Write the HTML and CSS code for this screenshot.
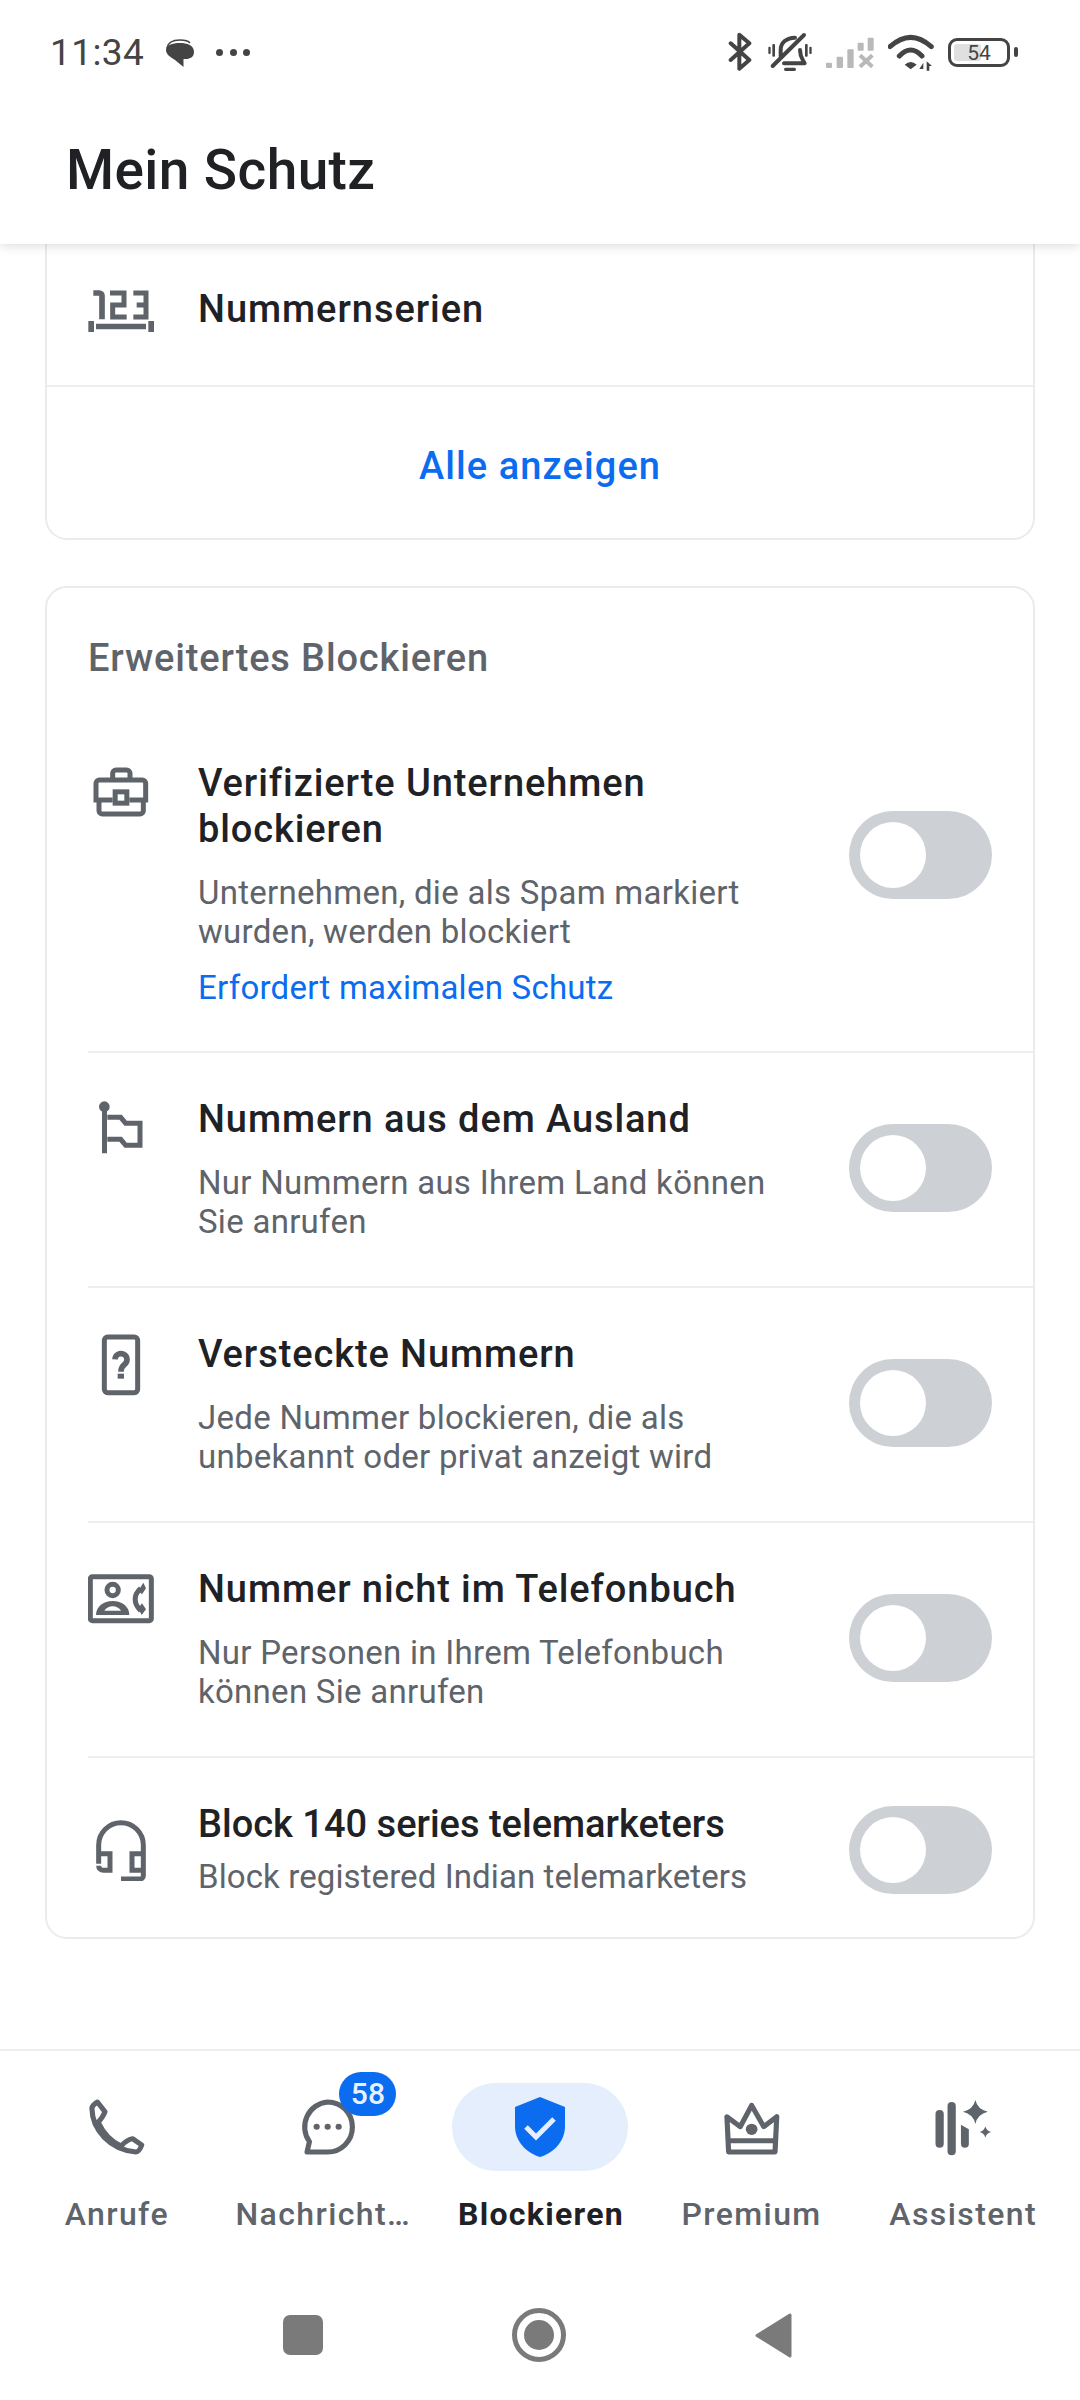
FILE: index.html
```html
<!DOCTYPE html>
<html lang="de">
<head>
<meta charset="utf-8">
<title>Mein Schutz</title>
<link rel="stylesheet" href="styles.css">
</head>
<body>
<div class="screen">
  <header class="top">
    <div class="status">
      <span class="time">11:34</span>
      <svg class="st-msg" viewBox="0 0 28 28"><path class="st-fill" d="M14 4C21 4 28 6 28 13C28 18 24 20 20 20H17.500V28L9 21C4 18 0 15 0 11C0 6 6 4 14 4Z"/><path class="st-line" d="M1 9C2 3 8 1 14 1C18 1 22 1.500 24 4"/></svg>
      <span class="st-dots"><i></i><i></i><i></i></span>
      <div class="st-right">
        <svg class="st-bt" viewBox="144 90 78 135"><path class="st-stroke" d="M152 130L208 180L178 206V104L208 130L152 180"/></svg>
        <svg class="st-bell" viewBox="264 90 132 135"><rect class="st-fill" x="265" y="140" width="7" height="22" rx="3"/><rect class="st-fill" x="277" y="132" width="8" height="38" rx="3"/><rect class="st-fill" x="375" y="132" width="8" height="38" rx="3"/><rect class="st-fill" x="388" y="140" width="7" height="22" rx="3"/><path class="st-stroke" d="M302 170V150C302 128 320 113 345 113M360 150C360 172 368 178 374 190H312M278 198L372 105"/><rect class="st-fill" x="312" y="203" width="36" height="10" rx="5"/></svg>
        <svg class="st-signal" viewBox="438 90 144 135"><g class="sig"><rect x="438" y="188" width="18" height="16" rx="3"/><rect x="470" y="170" width="19" height="34" rx="3"/><rect x="502" y="148" width="19" height="56" rx="3"/><rect x="533" y="128" width="18" height="24" rx="3"/><rect x="563" y="113" width="18" height="39" rx="3"/></g><path class="sig-x" d="M540 166L577 200M577 166L540 200"/></svg>
        <svg class="st-wifi" viewBox="622 90 138 135"><path class="st-stroke st-wide" d="M628 140Q690 84 752 140M656 168Q690 132 724 168"/><path class="st-fill" d="M672 194Q690 178 708 194L690 208Z"/><path class="st-fill" d="M716 207H728V188ZM738 184L754 198H746V212H738Z"/></svg>
        <div class="battery"><span class="bat-fill"></span><span class="bat-num">54</span><span class="bat-nub"></span></div>
      </div>
    </div>
    <h1 class="app-title">Mein Schutz</h1>
  </header>

  <main class="content">
    <section class="card card-open">
      <div class="series">
        <svg class="ic" viewBox="84 45 198 198"><path class="ic-l ic-17" d="M100 96H118A8 8 0 0 1 126 104V175"/><path class="ic-l" d="M150 96H192V132H158V168H200M220 96H258V168H220M230 132H258"/><path class="ic-f" d="M108 188H258V205H108ZM85 180H102V213H85ZM265 180H282V213H265Z"/></svg>
        <span class="series-label">Nummernserien</span>
      </div>
      <div class="show-all">Alle anzeigen</div>
    </section>

    <section class="card card-adv">
      <h2 class="card-title">Erweitertes Blockieren</h2>

      <div class="row row-first">
        <div class="row-main">
          <svg class="ic" viewBox="54 57 198 198"><path class="ic-l" d="M128 115V100A10 10 0 0 1 138 90H170A10 10 0 0 1 180 100V115M128 180H78V130A10 10 0 0 1 88 120H217A10 10 0 0 1 227 130V180H178M87 185V212A10 10 0 0 0 97 222H210A10 10 0 0 0 220 212V185"/><rect class="ic-l" x="135.500" y="155.500" width="35" height="34"/></svg>
          <div class="row-text">
            <div class="row-title">Verifizierte Unternehmen blockieren</div>
            <div class="row-sub">Unternehmen, die als Spam markiert wurden, werden blockiert</div>
          </div>
          <span class="toggle"><span class="thumb"></span></span>
        </div>
        <div class="row-link">Erfordert maximalen Schutz</div>
      </div>

      <div class="row">
        <div class="row-main">
          <svg class="ic" viewBox="54 45 198 198"><path class="ic-l" d="M103.500 75V220M112 112H152L167 130H210V196H167L152 178H112"/><circle class="ic-f" cx="103" cy="80" r="16"/></svg>
          <div class="row-text">
            <div class="row-title">Nummern aus dem Ausland</div>
            <div class="row-sub">Nur Nummern aus Ihrem Land können Sie anrufen</div>
          </div>
          <span class="toggle"><span class="thumb"></span></span>
        </div>
      </div>

      <div class="row">
        <div class="row-main">
          <svg class="ic" viewBox="54 747 198 198"><rect class="ic-l" x="103" y="768" width="100" height="167" rx="10"/><path class="ic-l ic-17" d="M135 835A18 18 0 1 1 164 850C156 856 153 860 153 872"/><rect class="ic-f" x="143" y="878" width="19" height="15"/></svg>
          <div class="row-text">
            <div class="row-title">Versteckte Nummern</div>
            <div class="row-sub">Jede Nummer blockieren, die als unbekannt oder privat anzeigt wird</div>
          </div>
          <span class="toggle"><span class="thumb"></span></span>
        </div>
      </div>

      <div class="row">
        <div class="row-main">
          <svg class="ic" viewBox="54 15 198 198"><rect class="ic-l" x="61" y="50" width="183" height="132" rx="6"/><circle class="ic-l" cx="128" cy="90" r="17"/><path class="ic-f" d="M78 165C78 140 100 123 128 123S178 140 178 165Z"/><path class="ic-cut" d="M103 152C108 144 118 139 128 139S148 144 153 152Z"/><path class="ic-l" d="M212 85C190 105 190 130 212 152"/><path class="ic-f" d="M205 92L220 68L228 85L216 103ZM205 145L216 130L228 148L215 165Z"/></svg>
          <div class="row-text">
            <div class="row-title">Nummer nicht im Telefonbuch</div>
            <div class="row-sub">Nur Personen in Ihrem Telefonbuch können Sie anrufen</div>
          </div>
          <span class="toggle"><span class="thumb"></span></span>
        </div>
      </div>

      <div class="row row-last">
        <div class="row-main">
          <svg class="ic ic-center" viewBox="54 759 198 198"><path class="ic-l" d="M86 905V849A67 67 0 0 1 220 849V941A10 10 0 0 1 210 951H153"/><path class="ic-l" d="M86 875H120V925H100A14 14 0 0 1 86 911M220 875H186V925H220"/></svg>
          <div class="row-text">
            <div class="row-title">Block 140 series telemarketers</div>
            <div class="row-sub">Block registered Indian telemarketers</div>
          </div>
          <span class="toggle"><span class="thumb"></span></span>
        </div>
      </div>
    </section>
  </main>

  <nav class="tabs">
    <div class="tab">
      <div class="tab-icon">
        <svg class="ic-nav" viewBox="244 162 192 198" preserveAspectRatio="none"><path class="ic-n" d="M283 186L305 215Q300 230 285 247Q310 300 352 318Q368 300 385 296L412 315Q405 335 395 336C320 330 268 270 267 205Q268 195 283 186Z"/></svg>
      </div>
      <span class="tab-label">Anrufe</span>
    </div>
    <div class="tab">
      <div class="tab-icon">
        <svg class="ic-nav" viewBox="860 162 192 198" preserveAspectRatio="none"><path class="ic-n" d="M955 186A72 75 0 0 1 955 336H895L902 305A72 75 0 0 1 955 186Z"/><circle class="ic-f" cx="923" cy="260" r="9"/><circle class="ic-f" cx="955" cy="260" r="9"/><circle class="ic-f" cx="987" cy="260" r="9"/></svg>
        <span class="badge">58</span>
      </div>
      <span class="tab-label">Nachrichten</span>
    </div>
    <div class="tab tab-active">
      <div class="tab-icon">
        <svg class="ic-nav" viewBox="0 0 66 66"><path class="shield" d="M33 3L58 13V32C58 48 46 59 33 63C20 59 8 48 8 32V13Z"/><path class="shield-check" d="M19 33L29 43L47 25"/></svg>
      </div>
      <span class="tab-label">Blockieren</span>
    </div>
    <div class="tab">
      <div class="tab-icon">
        <svg class="ic-nav" viewBox="520 162 192 198" preserveAspectRatio="none"><path class="ic-n" d="M543 230L582 260L615 196L650 260L688 230L683 336H548ZM548 302H683"/><circle class="ic-f" cx="615" cy="268" r="17"/></svg>
      </div>
      <span class="tab-label">Premium</span>
    </div>
    <div class="tab">
      <div class="tab-icon">
        <svg class="ic-nav" viewBox="1130 162 192 198" preserveAspectRatio="none"><rect class="ic-f" x="1146" y="210" width="24" height="113" rx="12"/><rect class="ic-f" x="1181" y="186" width="24" height="160" rx="12"/><path class="ic-f" d="M1220 254L1243 268V311A11.500 12 0 0 1 1220 311Z"/><path class="ic-f" d="M1262 180Q1268 208 1298 215Q1268 222 1262 252Q1256 222 1226 215Q1256 208 1262 180Z"/><path class="ic-f" d="M1291 259Q1294 273 1308 276Q1294 279 1291 293Q1288 279 1274 276Q1288 273 1291 259Z"/></svg>
      </div>
      <span class="tab-label">Assistent</span>
    </div>
  </nav>

  <div class="sysnav">
    <span class="sys-square"></span>
    <span class="sys-home"><span class="sys-home-dot"></span></span>
    <svg class="sys-back" viewBox="0 0 37 45"><path d="M35 2V43L2 22.500Z"/></svg>
  </div>
</div>
</body>
</html>
```
FILE: styles.css
```css
* { box-sizing: border-box; }
html, body { margin: 0; padding: 0; background: #fff; }
body { font-family: Roboto, "Liberation Sans", sans-serif; color: #202124; }

.screen {
  width: 1080px;
  height: 2400px;
  display: flex;
  flex-direction: column;
  overflow: hidden;
  background: #fff;
}

/* top */
.top {
  height: 244px;
  flex: none;
  background: #fff;
  box-shadow: 0 2px 10px rgba(60, 64, 67, .18);
  position: relative;
  z-index: 2;
}
.status {
  height: 105px;
  display: flex;
  align-items: center;
  padding: 0 0 0 50px;
  color: #444;
}
.time { font-size: 37px; line-height: 40px; color: #444; width: 116px; letter-spacing: .4px; }
.st-msg { width: 28px; height: 28px; margin-right: 22px; }
.st-dots { display: flex; gap: 6.500px; }
.st-dots i { width: 7px; height: 7px; border-radius: 50%; background: #444; display: block; }
.st-right { display: flex; align-items: center; gap: 14px; margin-left: auto; padding-right: 70px; }
.st-right svg { height: 45px; display: block; }
.st-bt { width: 26px; }
.st-bell { width: 44px; }
.st-signal { width: 48px; }
.st-wifi { width: 46px; }
.st-fill { fill: #444; }
.st-line { fill: none; stroke: #444; stroke-width: 1.500; }
.st-stroke { fill: none; stroke: #444; stroke-width: 12; stroke-linecap: round; stroke-linejoin: round; }
.st-wide { stroke-width: 15; }
.sig { fill: #b9b9b9; }
.sig-x { fill: none; stroke: #b9b9b9; stroke-width: 12; }

.battery {
  width: 62px;
  height: 29px;
  border: 3.500px solid #444;
  border-radius: 9px;
  position: relative;
  display: flex;
  align-items: center;
  justify-content: center;
}
.bat-fill { position: absolute; left: 3px; top: 3px; bottom: 3px; width: 27px; background: #e0e0e0; border-radius: 3px; }
.bat-num { position: relative; font-size: 21px; line-height: 22px; color: #444; }
.bat-nub { position: absolute; right: -11px; top: 6px; width: 4px; height: 10px; background: #444; border-radius: 2px; }

.app-title {
  margin: 0;
  padding: 33px 0 0 66px;
  font-size: 55px;
  line-height: 64px;
  font-weight: 500;
  letter-spacing: .4px;
  color: #202124;
}

/* content */
.content { flex: 1; min-height: 0; overflow: hidden; background: #fff; }
.card {
  margin: 0 45px;
  background: #fff;
  border: 2px solid #e9ebee;
  border-radius: 22px;
}
.card-open { border-top: 0; border-radius: 0 0 22px 22px; }
.card-adv { margin-top: 46px; padding-top: 47px; }

.series { height: 143px; display: flex; align-items: center; padding: 0 0 11px 41px; border-bottom: 2px solid #eceef0; }
.series-label { margin-left: 44px; font-size: 38px; line-height: 46px; font-weight: 500; letter-spacing: .95px; color: #202124; }
.show-all { height: 151px; padding-top: 7px; display: flex; align-items: center; justify-content: center; font-size: 38px; font-weight: 500; letter-spacing: 1.1px; color: #0b6cf0; }

.card-title {
  margin: 0 0 34px 41px;
  font-size: 38px;
  line-height: 46px;
  font-weight: 500;
  letter-spacing: .85px;
  color: #5f646b;
}

.row { margin-left: 41px; padding: 42px 41px 45px 0; border-top: 2px solid #eceef0; }
.row-first { border-top-color: transparent; padding-bottom: 44px; }
.row-last { padding-bottom: 41px; }
.row-main { display: flex; align-items: center; }
.ic { width: 66px; height: 66px; flex: none; align-self: flex-start; display: block; }
.ic-center { align-self: center; }
.series .ic { align-self: center; }
.row-text { width: 600px; margin-left: 44px; flex: none; padding-top: 1px; }
.row-title { font-size: 38px; line-height: 46px; font-weight: 500; letter-spacing: .9px; color: #202124; }
.row-sub { margin-top: 21px; font-size: 33px; line-height: 39px; letter-spacing: .28px; color: #5f646b; }
.row-link { margin: 17px 0 0 110px; font-size: 33px; line-height: 39px; letter-spacing: .25px; color: #0b6cf0; }
.row-last .row-title { letter-spacing: 0; }
.row-last .row-sub { margin-top: 10px; letter-spacing: .1px; }
.row-last .toggle { margin-top: 4px; }

.toggle {
  margin-left: auto;
  width: 143px;
  height: 88px;
  flex: none;
  border-radius: 44px;
  background: #cdd0d5;
  display: flex;
  align-items: center;
  padding-left: 11px;
}
.thumb { width: 66px; height: 66px; border-radius: 50%; background: #fff; display: block; }

.ic-l { fill: none; stroke: #5f646b; stroke-width: 15; }
.ic-17 { stroke-width: 17; }
.ic-f { fill: #5f646b; }
.ic-cut { fill: #fff; }
.ic-n { fill: none; stroke: #5f646b; stroke-width: 15; stroke-linejoin: round; }

/* tabs */
.tabs {
  height: 221px;
  flex: none;
  border-top: 2px solid #eceef0;
  padding: 32px 11px 0;
  display: grid;
  grid-template-columns: repeat(5, 1fr);
  background: #fff;
}
.tab { display: flex; flex-direction: column; align-items: center; min-width: 0; }
.tab-icon {
  height: 88px;
  width: 176px;
  border-radius: 44px;
  display: flex;
  align-items: center;
  justify-content: center;
  position: relative;
}
.ic-nav { width: 66px; height: 66px; display: block; }
.tab-active .tab-icon { background: #e4eefc; }
.badge {
  position: absolute;
  left: 99px;
  top: -11px;
  width: 57px;
  height: 44px;
  border-radius: 22px;
  background: #0b6cf0;
  color: #e8f1ff;
  font-size: 30px;
  line-height: 44px;
  text-align: center;
  font-weight: 500;
}
.tab-label {
  margin-top: 23px;
  width: 186px;
  text-align: center;
  white-space: nowrap;
  overflow: hidden;
  text-overflow: ellipsis;
  font-size: 32px;
  line-height: 40px;
  font-weight: 500;
  letter-spacing: 1.4px;
  color: #5f646b;
}
.tab-active .tab-label { font-weight: 700; color: #202124; letter-spacing: 1.3px; padding-left: 2px; }
.shield { fill: #0b6cf0; }
.shield-check { fill: none; stroke: #e4eefc; stroke-width: 5; }

/* system nav */
.sysnav { flex: none; height: 130px; background: #fff; display: flex; align-items: center; padding: 0 0 0 283px; }
.sys-square { width: 40px; height: 40px; border-radius: 7px; background: #7a7a7a; display: block; flex: none; margin-right: 189px; }
.sys-home { width: 54px; height: 54px; border-radius: 50%; border: 5px solid #7a7a7a; display: flex; align-items: center; justify-content: center; flex: none; margin-right: 189px; }
.sys-home-dot { width: 30px; height: 30px; border-radius: 50%; background: #7a7a7a; display: block; }
.sys-back { width: 37px; height: 45px; flex: none; }
.sys-back path { fill: #7a7a7a; stroke: #7a7a7a; stroke-width: 3; stroke-linejoin: round; }
```
